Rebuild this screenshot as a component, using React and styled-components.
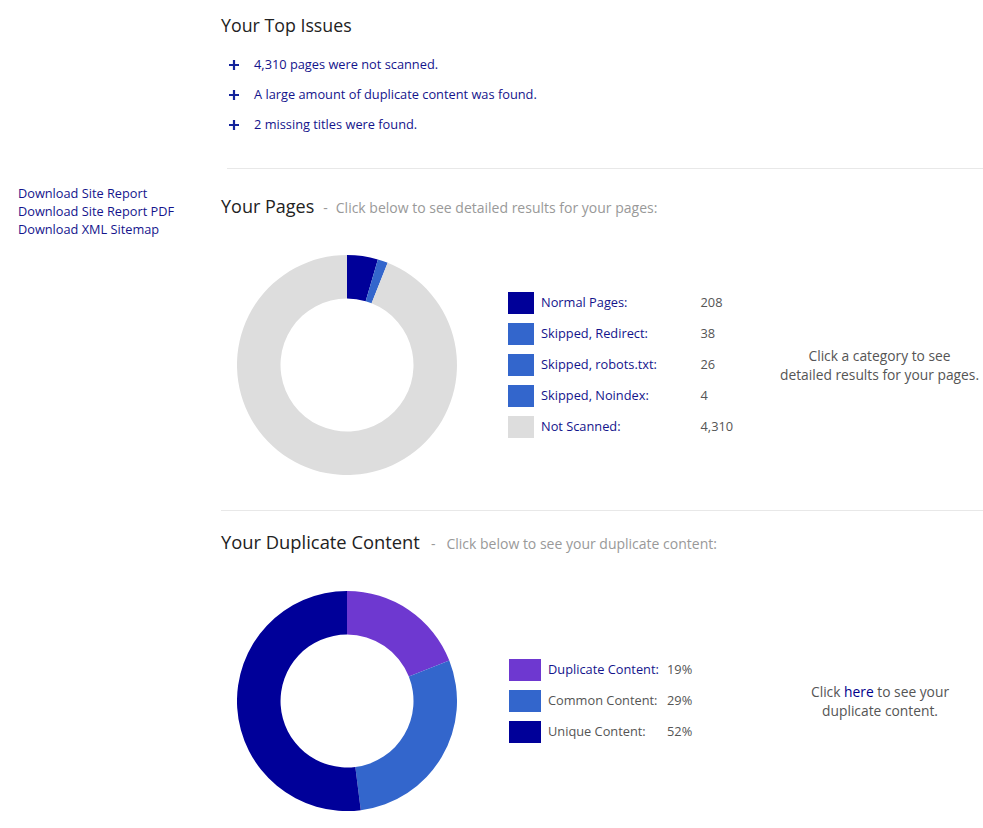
import React from "react";
import styled, { createGlobalStyle } from "styled-components";

const Global = createGlobalStyle`
  html, body { margin: 0; padding: 0; background: #fff; }
  body { font-family: "Open Sans", "Noto Sans", "Liberation Sans", sans-serif; color: #555; }
  a { text-decoration: none; color: #00008b; }
`;
const Page = styled.div`
  display: flex;
  width: 983px;
  height: 828px;
  overflow: hidden;
`;
const Sidebar = styled.nav`
  width: 221px;
  flex: none;
  box-sizing: border-box;
  padding: 184px 0 0 18px;
  display: flex;
  flex-direction: column;
`;
const SideLink = styled.a`
  font-size: 12.75px;
  line-height: 18px;
  color: #14148c;
  white-space: nowrap;
`;
const Main = styled.main`
  flex: 1;
  min-width: 0;
`;
const Title = styled.h2`
  margin: 0;
  font-weight: 400;
  font-size: ${p => p.$size || 18}px;
  line-height: 24px;
  color: #222;
  white-space: nowrap;
`;
const Hint = styled.span`
  font-size: 14px;
  color: #999;
  margin-left: ${p => p.$gap}px;
`;
const Dash = styled.span`
  margin-right: ${p => p.$gap}px;
`;
const Issues = styled.section`
  padding-top: 13px;
`;
const IssueList = styled.ul`
  list-style: none;
  margin: 12px 0 0;
  padding: 0 0 0 8px;
`;
const Issue = styled.li`
  display: flex;
  align-items: center;
  height: 30px;
  font-size: 12.8px;
  color: #14148c;
`;
const Plus = styled.svg`
  width: 10px;
  height: 10px;
  margin: 2px 15px 0 0;
  flex: none;
`;
const Rule = styled.hr`
  border: 0;
  border-top: 1px solid #e8e8e8;
  margin: ${p => p.$top}px 0 0 ${p => p.$left}px;
`;
const SectionHead = styled.div`
  padding-top: ${p => p.$top}px;
`;
const Row = styled.div`
  display: flex;
  align-items: center;
  margin-top: 35px;
  height: 220px;
  padding-left: 16px;
`;
const Donut = styled.svg`
  width: 220px;
  height: 220px;
  flex: none;
`;
const Legend = styled.div`
  display: flex;
  flex-direction: column;
  gap: 9px;
  margin-left: ${p => p.$left}px;
  width: 250px;
  flex: none;
`;
const LegendRow = styled.div`
  display: flex;
  align-items: center;
  height: 22px;
  font-size: 12.8px;
`;
const Swatch = styled.span`
  width: ${p => p.$w}px;
  height: 22px;
  flex: none;
  background: ${p => p.$color};
  margin-right: 7px;
`;
const Label = styled.a`
  width: ${p => p.$w}px;
  flex: none;
  margin-bottom: 2px;
  color: ${p => (p.$plain ? "#555" : "#14148c")};
  white-space: nowrap;
`;
const Value = styled.span`
  margin-bottom: 2px;
  color: #555;
`;
const Note = styled.p`
  margin: 0;
  flex: 1;
  padding-left: 18px;
  text-align: center;
  font-size: 13.8px;
  line-height: 19px;
  color: #555;
  white-space: nowrap;
`;

function arc(r, R, a0, a1) {
  const p = (rad, a) => {
    const t = ((a - 90) * Math.PI) / 180;
    return `${(110 + rad * Math.cos(t)).toFixed(2)} ${(110 + rad * Math.sin(t)).toFixed(2)}`;
  };
  const large = a1 - a0 > 180 ? 1 : 0;
  return `M${p(R, a0)}A${R} ${R} 0 ${large} 1 ${p(R, a1)}L${p(r, a1)}A${r} ${r} 0 ${large} 0 ${p(r, a0)}Z`;
}
function Ring({ slices }) {
  let a = 0;
  return (
    <Donut viewBox="0 0 220 220">
      {slices.map(([v, c], i) => {
        const d = arc(66.5, 110, a, a + v);
        a += v;
        return <path key={i} d={d} fill={c} />;
      })}
    </Donut>
  );
}

const NAVY = "#000099";
const BLUE = "#3366cc";
const GREY = "#dddddd";
const PURPLE = "#6e38d0";

const pages = [
  ["Normal Pages:", "208", NAVY],
  ["Skipped, Redirect:", "38", BLUE],
  ["Skipped, robots.txt:", "26", BLUE],
  ["Skipped, Noindex:", "4", BLUE],
  ["Not Scanned:", "4,310", GREY],
];
const dup = [
  ["Duplicate Content:", "19%", PURPLE, false],
  ["Common Content:", "29%", BLUE, true],
  ["Unique Content:", "52%", NAVY, true],
];

export default function App() {
  return (
    <Page>
      <Global />
      <Sidebar>
        <SideLink href="#">Download Site Report</SideLink>
        <SideLink href="#">Download Site Report PDF</SideLink>
        <SideLink href="#">Download XML Sitemap</SideLink>
      </Sidebar>
      <Main>
        <Issues>
          <Title $size={17.8}>Your Top Issues</Title>
          <IssueList>
            {["4,310 pages were not scanned.", "A large amount of duplicate content was found.", "2 missing titles were found."].map(t => (
              <Issue key={t}>
                <Plus viewBox="0 0 10 10"><path d="M5 0v10M0 5h10" stroke="#14249c" strokeWidth="2.2" /></Plus>
                {t}
              </Issue>
            ))}
          </IssueList>
        </Issues>
        <Rule $top={29} $left={6} />
        <SectionHead $top={25}>
          <Title>Your Pages<Hint $gap={9}><Dash $gap={8}>-</Dash>Click below to see detailed results for your pages:</Hint></Title>
        </SectionHead>
        <Row>
          <Ring slices={[[16.3, NAVY], [5.4, BLUE], [338.3, GREY]]} />
          <Legend $left={51}>
            {pages.map(([l, v, c]) => (
              <LegendRow key={l}>
                <Swatch $w={26} $color={c} />
                <Label href="#" $w={159.5}>{l}</Label>
                <Value>{v}</Value>
              </LegendRow>
            ))}
          </Legend>
          <Note>Click a category to see<br />detailed results for your pages.</Note>
        </Row>
        <Rule $top={35} $left={0} />
        <SectionHead $top={19}>
          <Title $size={18.35}>Your Duplicate Content<Hint $gap={11}><Dash $gap={11}>-</Dash>Click below to see your duplicate content:</Hint></Title>
        </SectionHead>
        <Row>
          <Ring slices={[[68.4, PURPLE], [104.4, BLUE], [187.2, NAVY]]} />
          <Legend $left={52}>
            {dup.map(([l, v, c, plain]) => (
              <LegendRow key={l}>
                <Swatch $w={32} $color={c} />
                <Label href="#" $w={119} $plain={plain}>{l}</Label>
                <Value>{v}</Value>
              </LegendRow>
            ))}
          </Legend>
          <Note>Click <a href="#">here</a> to see your<br />duplicate content.</Note>
        </Row>
      </Main>
    </Page>
  );
}
